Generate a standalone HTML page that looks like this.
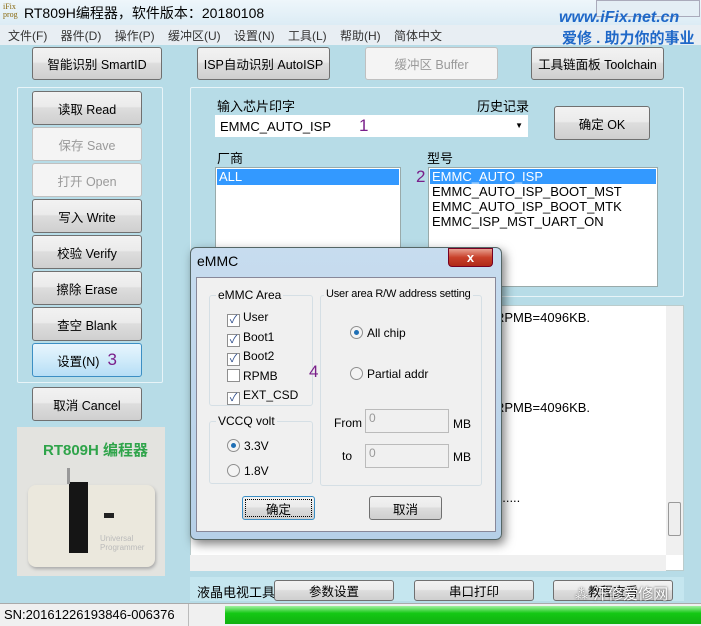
<!DOCTYPE html>
<html><head><meta charset="utf-8"><style>
*{box-sizing:border-box;margin:0;padding:0}
body{width:701px;height:626px;overflow:hidden;background:#b7dce7;font-family:"Liberation Sans","Noto Sans CJK SC",sans-serif;font-size:12px;color:#000;position:relative}
.a{position:absolute}
.btn{position:absolute;border:1px solid #707070;border-radius:3px;background:linear-gradient(#f2f2f2,#ebebeb 45%,#dddddd 50%,#cfcfcf);display:flex;align-items:center;justify-content:center;font-size:12.5px;white-space:nowrap}
.dis{color:#9a9a9a;border-color:#c0c0c0;background:#f4f4f4}
.grp{position:absolute;border:1px solid #e8f4f8;border-radius:2px}
.white{background:#fff;border:1px solid #9aa}
.dgrp{position:absolute;border:1px solid #d5dfe5;border-radius:3px}
.lg{position:absolute;background:#f0f0f0;padding:0 2px;top:-8px;left:6px;font-size:12px;white-space:nowrap}
.cb{display:inline-block;width:13px;height:13px;border:1px solid #8f8f8f;background:#fff;vertical-align:-2px;margin-right:3px;font-size:11px;line-height:11px;text-align:center;color:#2a4a8a}
.rd{display:inline-block;width:13px;height:13px;border:1px solid #8f8f8f;border-radius:50%;background:#f4f4f4;vertical-align:-2px;margin-right:4px;position:relative}
.rd.on::after{content:"";position:absolute;left:3px;top:3px;width:5px;height:5px;border-radius:50%;background:#1f6fb5}
.pu{color:#7a1f8a;font-size:17px}
</style></head><body>
<div class="a" style="left:0;top:0;width:701px;height:25px;background:linear-gradient(#eef6fb,#dcecf5)"></div>
<div class="a" style="left:3px;top:3px;font-size:8px;line-height:8px;color:#8a6a10;font-family:'Liberation Serif',serif">iFix<br>prog</div>
<div class="a" style="left:24px;top:3px;font-size:14px">RT809H编程器，软件版本：20180108</div>
<div class="a" style="left:596px;top:0;width:104px;height:17px;background:#e4eef5;border:1px solid #aab"></div>
<div class="a" style="left:559px;top:9px;font-size:16px;font-style:italic;color:#1f68c8;font-weight:bold">www.iFix.net.cn</div>
<div class="a" style="left:0;top:25px;width:701px;height:20px;background:#e8eef3"></div>
<div class="a" style="left:8px;top:27px;font-size:12px;color:#333;word-spacing:10px">文件(F) 器件(D) 操作(P) 缓冲区(U) 设置(N) 工具(L) 帮助(H) 简体中文</div>
<div class="a" style="left:562px;top:27px;font-size:15px;font-weight:bold;color:#1f68c8">爱修 . 助力你的事业</div>

<div class="btn" style="left:32px;top:47px;width:130px;height:33px">智能识别 SmartID</div>
<div class="btn" style="left:197px;top:47px;width:133px;height:33px">ISP自动识别 AutoISP</div>
<div class="btn dis" style="left:365px;top:47px;width:133px;height:33px">缓冲区 Buffer</div>
<div class="btn" style="left:531px;top:47px;width:133px;height:33px">工具链面板 Toolchain</div>

<div class="grp" style="left:17px;top:87px;width:146px;height:296px"></div>
<div class="btn" style="left:32px;top:91px;width:110px;height:34px">读取 Read</div>
<div class="btn dis" style="left:32px;top:127px;width:110px;height:34px">保存 Save</div>
<div class="btn dis" style="left:32px;top:163px;width:110px;height:34px">打开 Open</div>
<div class="btn" style="left:32px;top:199px;width:110px;height:34px">写入 Write</div>
<div class="btn" style="left:32px;top:235px;width:110px;height:34px">校验 Verify</div>
<div class="btn" style="left:32px;top:271px;width:110px;height:34px">擦除 Erase</div>
<div class="btn" style="left:32px;top:307px;width:110px;height:34px">查空 Blank</div>
<div class="btn" style="left:32px;top:343px;width:110px;height:34px;border-color:#3c8fc4;background:linear-gradient(#e8f5fd,#d0ebfa 50%,#b6def6)">设置(N) <span class="pu" style="margin-left:8px">3</span></div>
<div class="btn" style="left:32px;top:387px;width:110px;height:34px">取消 Cancel</div>
<div class="a" style="left:17px;top:427px;width:148px;height:149px;background:#e3e3df"></div>
<div class="a" style="left:43px;top:439px;font-size:15px;font-weight:bold;color:#2fa44a">RT809H 编程器</div>
<div class="a" style="left:28px;top:485px;width:127px;height:82px;background:#ebe8dd;border-radius:8px;box-shadow:1px 2px 3px #aaa"></div>
<div class="a" style="left:69px;top:482px;width:19px;height:71px;background:#151515"></div>
<div class="a" style="left:67px;top:468px;width:3px;height:16px;background:#999"></div>
<div class="a" style="left:104px;top:513px;width:10px;height:5px;background:#222"></div>
<div class="a" style="left:100px;top:534px;font-size:8px;color:#bbb;line-height:9px">Universal<br>Programmer</div>

<div class="grp" style="left:190px;top:87px;width:494px;height:210px"></div>
<div class="a" style="left:217px;top:96px;font-size:13px">输入芯片印字</div>
<div class="a" style="left:477px;top:96px;font-size:13px">历史记录</div>
<div class="a white" style="left:215px;top:115px;width:313px;height:22px;border-color:#fff;padding:3px 4px;font-size:13px">EMMC_AUTO_ISP<span class="pu" style="position:absolute;left:143px;top:0">1</span><span style="position:absolute;right:4px;top:5px;font-size:8px">▼</span></div>
<div class="btn" style="left:554px;top:106px;width:96px;height:34px">确定 OK</div>
<div class="a" style="left:217px;top:148px;font-size:13px">厂商</div>
<div class="a" style="left:427px;top:148px;font-size:13px">型号</div>
<div class="a white" style="left:215px;top:167px;width:186px;height:140px;padding:1px"><div style="background:#3399ff;color:#fff;height:16px;padding-left:2px;font-size:13px">ALL</div></div>
<div class="a pu" style="left:416px;top:167px">2</div>
<div class="a white" style="left:428px;top:167px;width:230px;height:120px;padding:1px;font-size:13px;line-height:15px"><div style="background:#3399ff;color:#fff;padding-left:2px">EMMC_AUTO_ISP</div><div style="padding-left:2px">EMMC_AUTO_ISP_BOOT_MST<br>EMMC_AUTO_ISP_BOOT_MTK<br>EMMC_ISP_MST_UART_ON</div></div>

<div class="a white" style="left:190px;top:305px;width:494px;height:266px;border-color:#bcc"></div>
<div class="a" style="left:495px;top:310px;font-size:13px;line-height:15px">RPMB=4096KB.<br><br><br>2<br>0<br><br>RPMB=4096KB.<br><br><br><br><br><br>.......</div>
<div class="a" style="left:666px;top:306px;width:17px;height:249px;background:#f0f0f0"></div>
<div class="a" style="left:668px;top:502px;width:13px;height:34px;border:1px solid #999;border-radius:2px;background:#eee"></div>
<div class="a" style="left:190px;top:555px;width:476px;height:16px;background:#f0f0f0"></div>

<div class="a" style="left:190px;top:577px;width:494px;height:24px;background:#c5e6ef"></div>
<div class="a" style="left:197px;top:582px;font-size:13px">液晶电视工具</div>
<div class="btn" style="left:274px;top:580px;width:120px;height:21px">参数设置</div>
<div class="btn" style="left:414px;top:580px;width:120px;height:21px">串口打印</div>
<div class="btn" style="left:553px;top:580px;width:120px;height:21px">教程查看</div>
<div class="a" style="left:574px;top:583px;font-size:15px;color:#fff;text-shadow:0 0 2px #333">⁂ 汗修爱修网</div>

<div class="a" style="left:0;top:603px;width:701px;height:23px;background:#f0f0f0;border-top:1px solid #aaa"></div>
<div class="a" style="left:0;top:604px;width:189px;height:22px;border-right:1px solid #bbb;padding:3px 4px;font-size:13px">SN:20161226193846-006376</div>
<div class="a" style="left:225px;top:606px;width:476px;height:18px;background:linear-gradient(#a0f0a0,#14c814 40%,#10b010)"></div>

<!-- dialog -->
<div class="a" style="left:190px;top:247px;width:312px;height:293px;background:linear-gradient(#c7dcef,#b6d0e8);border:1px solid #566;border-radius:6px;box-shadow:3px 4px 10px rgba(0,0,0,.5)"></div>
<div class="a" style="left:197px;top:253px;font-size:14px">eMMC</div>
<div class="a" style="left:448px;top:248px;width:45px;height:19px;border-radius:0 0 4px 4px;background:linear-gradient(#e8a090,#c8402a 50%,#b02a18);border:1px solid #702;color:#fff;font-weight:bold;text-align:center;font-size:13px;line-height:17px">x</div>
<div class="a" style="left:196px;top:277px;width:300px;height:255px;background:#f0f0f0;border:1px solid #889"></div>
<div class="dgrp" style="left:209px;top:295px;width:104px;height:111px"><span class="lg">eMMC Area</span>
<div style="position:absolute;left:17px;top:12px;line-height:19.6px;font-size:12px"><span class="cb">✓</span>User<br><span class="cb">✓</span>Boot1<br><span class="cb">✓</span>Boot2<br><span class="cb"></span>RPMB<br><span class="cb">✓</span>EXT_CSD</div></div>
<div class="dgrp" style="left:209px;top:421px;width:104px;height:63px"><span class="lg">VCCQ volt</span>
<div style="position:absolute;left:17px;top:12px;line-height:25px"><span class="rd on"></span>3.3V<br><span class="rd"></span>1.8V</div></div>
<div class="a pu" style="left:309px;top:362px">4</div>
<div class="dgrp" style="left:320px;top:295px;width:162px;height:191px"><span class="lg" style="left:3px;font-size:11px;letter-spacing:-0.2px">User area R/W address setting</span>
<div style="position:absolute;left:29px;top:30px"><span class="rd on"></span>All chip</div>
<div style="position:absolute;left:29px;top:71px"><span class="rd"></span>Partial addr</div>
<div style="position:absolute;left:13px;top:120px">From</div>
<div style="position:absolute;left:44px;top:113px;width:84px;height:24px;border:1px solid #bbb;color:#999;padding:1px 3px">0</div>
<div style="position:absolute;left:132px;top:121px">MB</div>
<div style="position:absolute;left:21px;top:153px">to</div>
<div style="position:absolute;left:44px;top:148px;width:84px;height:24px;border:1px solid #bbb;color:#999;padding:1px 3px">0</div>
<div style="position:absolute;left:132px;top:154px">MB</div></div>
<div class="btn" style="left:242px;top:496px;width:73px;height:24px;border-color:#3c8fc4;outline:1px dotted #000;outline-offset:-4px">确定</div>
<div class="btn" style="left:369px;top:496px;width:73px;height:24px">取消</div>
</body></html>
